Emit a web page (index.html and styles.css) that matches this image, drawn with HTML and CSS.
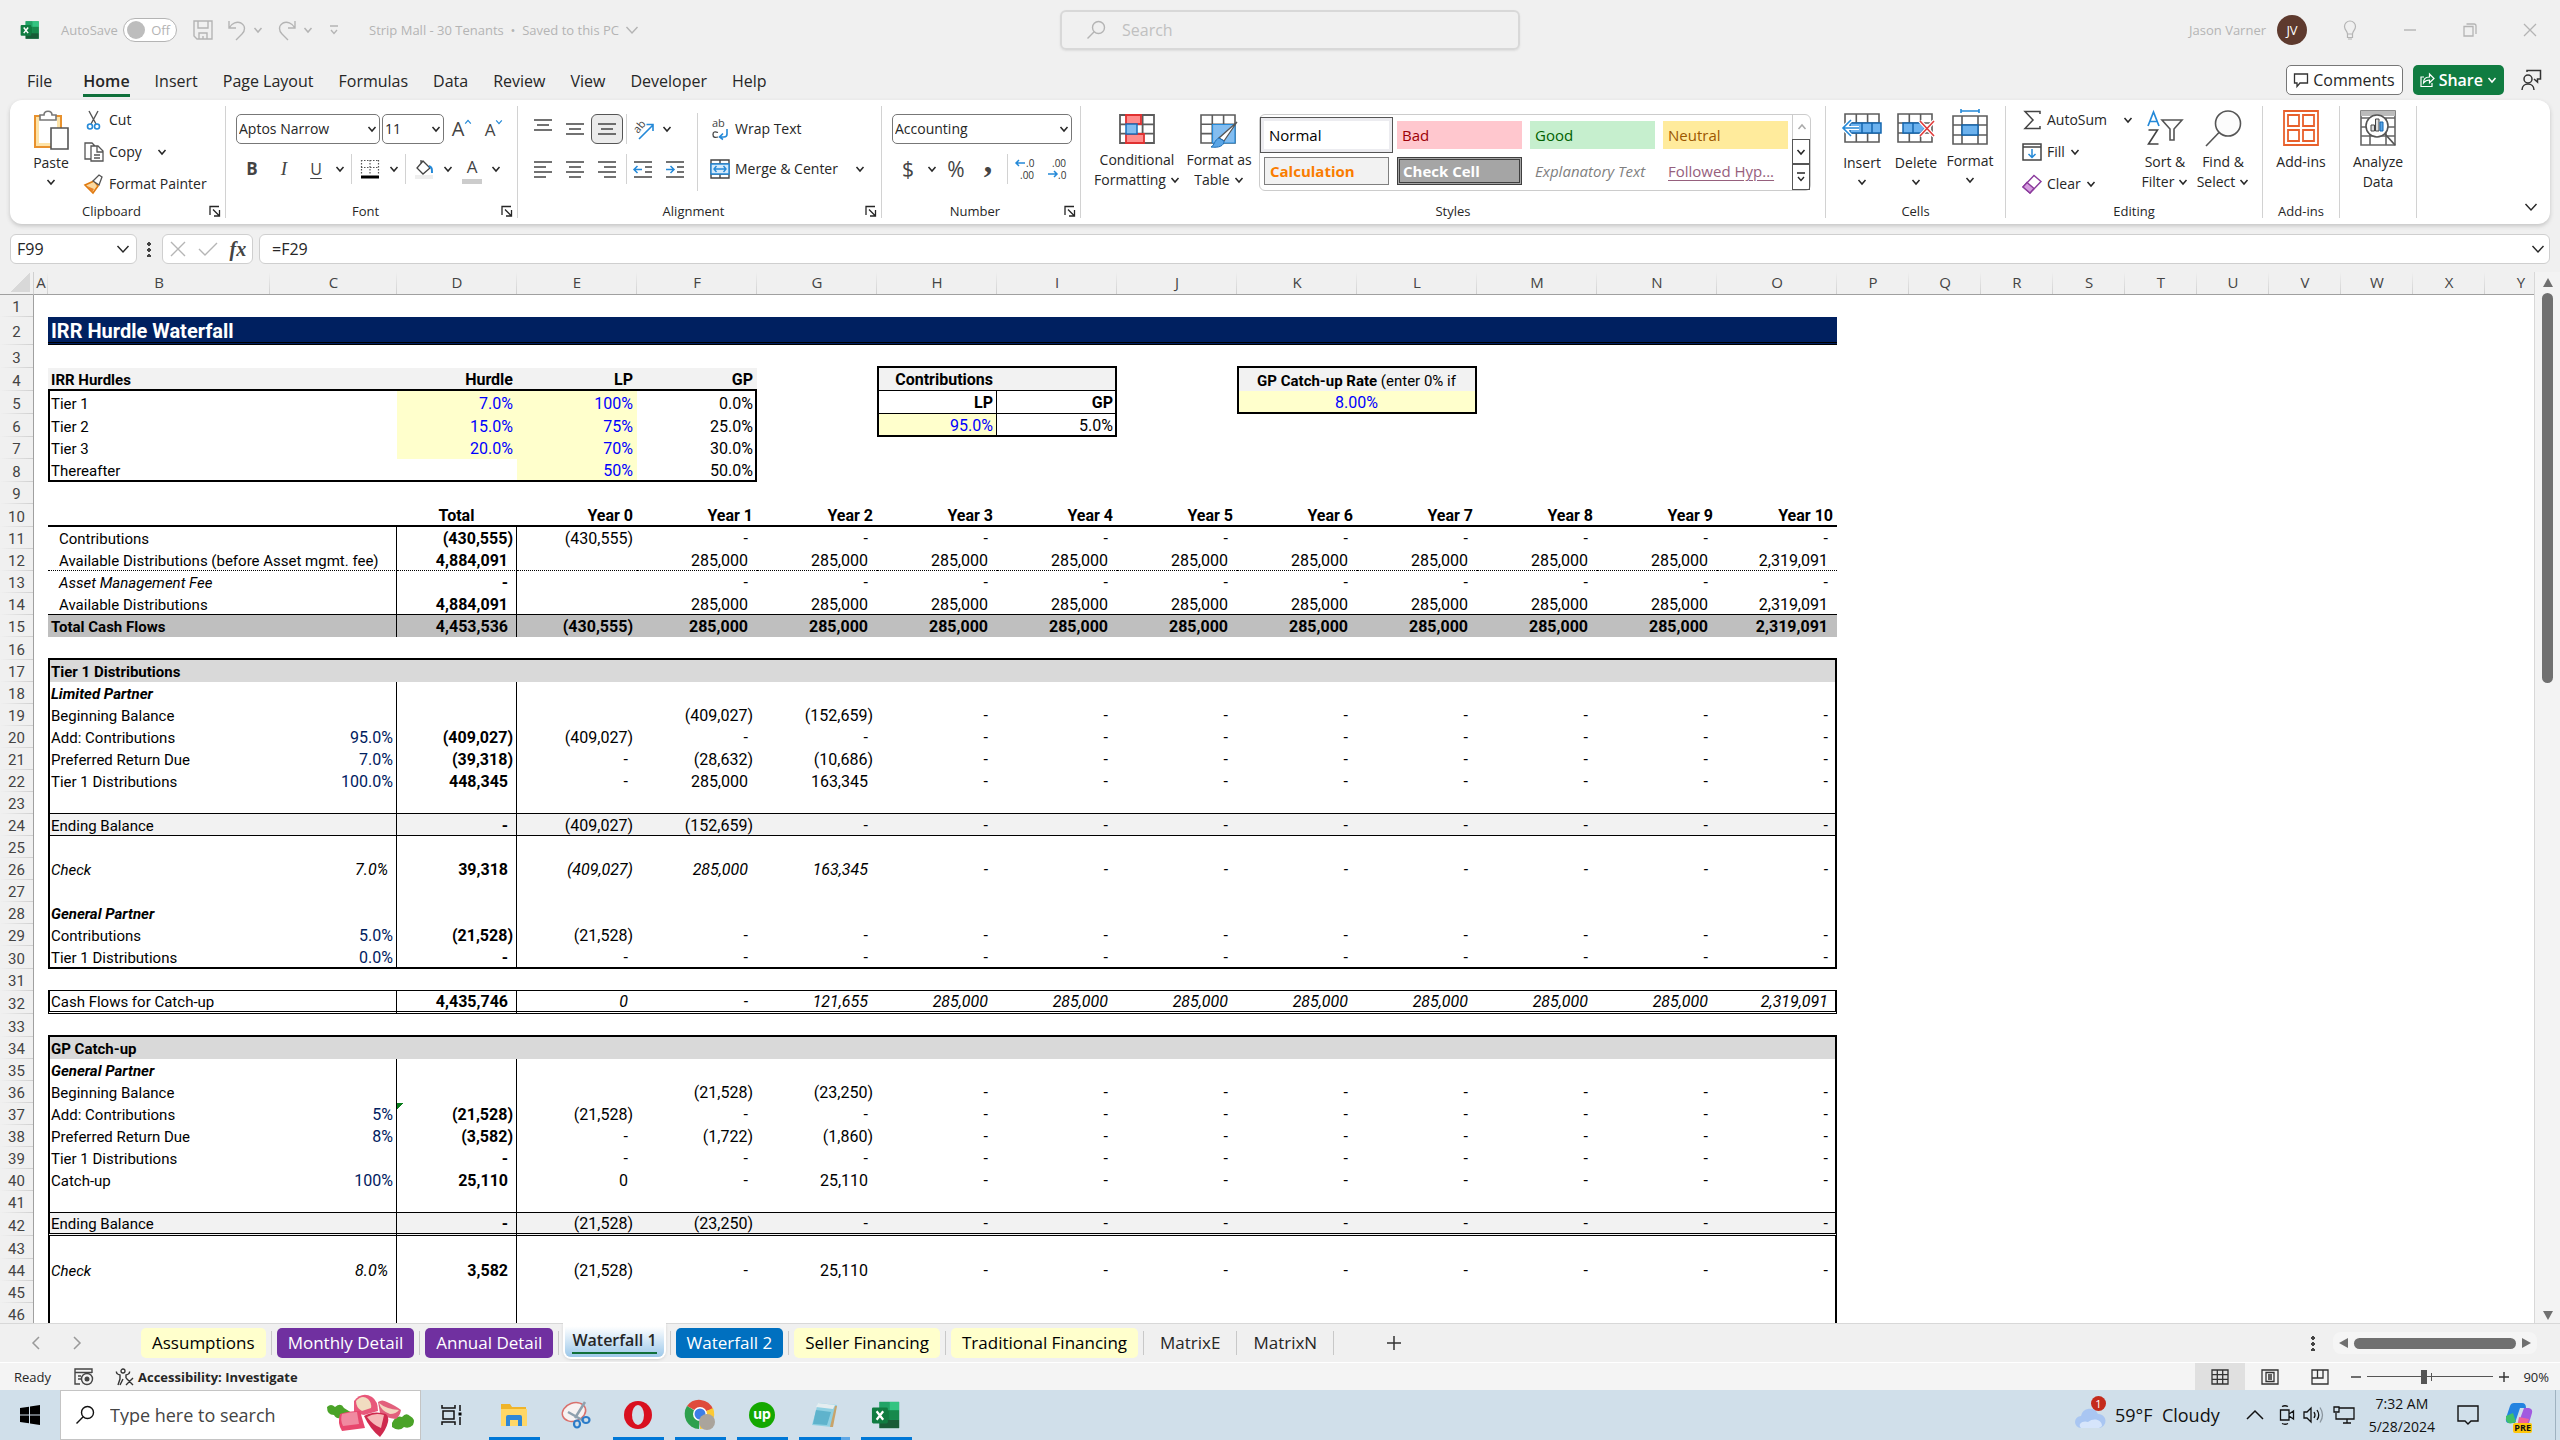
FILE: index.html
```html
<!DOCTYPE html>
<html lang="en">
<head>
<meta charset="utf-8">
<title>Strip Mall - 30 Tenants</title>
<link rel="stylesheet" href="styles.css">
</head>
<body>
<svg class="sprite" aria-hidden="true">
  <symbol id="chev" viewBox="0 0 10 10"><path d="M1.500 3l3.500 4 3.500-4" fill="none" stroke="currentColor" stroke-width="1.500"/></symbol>
  <symbol id="chev-lg" viewBox="0 0 14 14"><path d="M1.500 4l5.500 6 5.500-6" fill="none" stroke="currentColor" stroke-width="1.400"/></symbol>
  <symbol id="launch" viewBox="0 0 12 12"><path d="M1 10V1.500h9M4 4.500l6 6M10.500 5v6H5" fill="none" stroke="currentColor" stroke-width="1.300"/></symbol>
  <symbol id="excel" viewBox="0 0 32 32">
    <path d="M9 2h21v28H9z" fill="#21a366"/><path d="M9 2h11v9H9z" fill="#21a366"/><path d="M20 2h10v9H20z" fill="#33c481"/><path d="M9 11h11v10H9z" fill="#107c41"/><path d="M20 21h10v9H9v-9z" fill="#185c37"/><path d="M20 11h10v10H20z" fill="#17894c"/>
    <rect x="1" y="8" width="17" height="17" rx="1.500" fill="#107c41"/><path d="M6 12l7 9M13 12l-7 9" stroke="#fff" stroke-width="2.400"/>
  </symbol>
  <symbol id="magnify" viewBox="0 0 20 20"><circle cx="12.500" cy="7.500" r="6" fill="none" stroke="currentColor" stroke-width="1.400"/><path d="M8.200 11.800L1.500 18.500" stroke="currentColor" stroke-width="1.400"/></symbol>
  <symbol id="grid3" viewBox="0 0 36 30"><path d="M1 1h34v28H1zM12.300 1v28M23.600 1v28M1 10.300h34M1 19.600h34" fill="#fff" stroke="#5c5c5c" stroke-width="1.800"/></symbol>
  <symbol id="al" viewBox="0 0 20 18"><path d="M1 2h18M1 7h12M1 12h18M1 17h12" stroke="#444" stroke-width="1.500"/></symbol>
  <symbol id="ac" viewBox="0 0 20 18"><path d="M1 2h18M4 7h12M1 12h18M4 17h12" stroke="#444" stroke-width="1.500"/></symbol>
  <symbol id="ar" viewBox="0 0 20 18"><path d="M1 2h18M7 7h12M1 12h18M7 17h12" stroke="#444" stroke-width="1.500"/></symbol>
  <symbol id="v3" viewBox="0 0 20 14"><path d="M1 2h18M4 7h12M1 12h18" stroke="#444" stroke-width="1.500"/></symbol>
</svg>

<header class="titlebar">
  <div class="title-left">
    <svg class="i20"><use href="#excel"/></svg>
    <label class="autosave" for="autosave">AutoSave</label>
    <span class="switch"><input type="checkbox" id="autosave"><span class="switch-text">Off</span></span>
    <button class="tool" aria-label="Save"><svg width="20" height="22" viewBox="0 0 20 22"><path d="M1 2h18v18H4l-3-3zM5 2v7h10V2M6 20v-6h8v6M10 17v3" fill="none" stroke="currentColor" stroke-width="1.400"/></svg></button>
    <button class="tool pair" aria-label="Undo"><svg width="20" height="22" viewBox="0 0 20 22"><path d="M2 2v7h7M2 9c3-5 8-7 12-5 5 3 4 8 1 11l-6 6" fill="none" stroke="currentColor" stroke-width="1.400"/></svg><svg class="i10"><use href="#chev"/></svg></button>
    <button class="tool pair" aria-label="Redo"><svg width="20" height="22" viewBox="0 0 20 22"><path d="M18 2v7h-7M18 9c-3-5-8-7-12-5-5 3-4 8-1 11l6 6" fill="none" stroke="currentColor" stroke-width="1.400"/></svg><svg class="i10"><use href="#chev"/></svg></button>
    <button class="tool" aria-label="Customize"><svg width="10" height="12" viewBox="0 0 10 12"><path d="M1 2h8M2 6l3 3.500L8 6" fill="none" stroke="currentColor" stroke-width="1.300"/></svg></button>
    <button class="tool doc">Strip Mall - 30 Tenants&nbsp; •&nbsp; Saved to this PC <svg class="i14"><use href="#chev-lg"/></svg></button>
  </div>
  <label class="search"><svg class="i20"><use href="#magnify"/></svg><input type="text" placeholder="Search" aria-label="Search"></label>
  <div class="title-right">
    <span>Jason Varner</span><span class="avatar">JV</span>
    <button class="win" aria-label="Tips"><svg width="14" height="20" viewBox="0 0 14 20"><path d="M4.500 14c0-3-3-4-3-7.500a5.500 5.500 0 0111 0c0 3.500-3 4.500-3 7.500zM4.500 14v3.500h5V14M5 19h4" fill="none" stroke="currentColor" stroke-width="1.200"/></svg></button>
    <button class="win" aria-label="Minimize"><svg width="14" height="14" viewBox="0 0 14 14"><path d="M1 7h12" stroke="currentColor" stroke-width="1.400"/></svg></button>
    <button class="win" aria-label="Restore"><svg width="16" height="16" viewBox="0 0 16 16"><path d="M2 4.500h9V14H2zM4.500 2h7.500q2 0 2 2v8" fill="none" stroke="currentColor" stroke-width="1.300"/></svg></button>
    <button class="win" aria-label="Close"><svg width="14" height="14" viewBox="0 0 14 14"><path d="M1 1l12 12M13 1L1 13" stroke="currentColor" stroke-width="1.300"/></svg></button>
  </div>
</header>

<nav class="menu">
  <a href="#file" class="file">File</a><a href="#home" class="current">Home</a><a href="#insert">Insert</a><a href="#layout">Page Layout</a><a href="#formulas">Formulas</a><a href="#data">Data</a><a href="#review">Review</a><a href="#view">View</a><a href="#developer">Developer</a><a href="#help">Help</a>
  <div class="menu-right">
    <button class="comments"><svg width="16" height="16" viewBox="0 0 16 16"><path d="M1.500 2h13v9H7l-3 3.500V11H1.500z" fill="none" stroke="#333" stroke-width="1.300"/></svg>Comments</button>
    <button class="share"><svg width="16" height="16" viewBox="0 0 16 16"><path d="M5 5H2v9.500h11V11M4.500 11c0-4 2-6 6-6V2l4.500 4.500-4.500 4.300V8c-3 0-4.500 1-6 3z" fill="none" stroke="#fff" stroke-width="1.200"/></svg>Share <svg class="i10"><use href="#chev"/></svg></button>
    <button class="tool person" aria-label="Presence"><svg width="22" height="22" viewBox="0 0 22 22"><circle cx="8" cy="10" r="4" fill="none" stroke="currentColor" stroke-width="1.500"/><path d="M2 21c0-8 12-8 12 0M7 3V1.500h13.500V10h-3v3L14 10" fill="none" stroke="currentColor" stroke-width="1.500"/></svg></button>
  </div>
</nav>

<section class="ribbon">
  <div class="group g-clip">
    <div class="body">
      <button class="big paste"><svg width="38" height="40" viewBox="0 0 38 40"><path d="M3 6h26v31H3z" fill="#fde3a8" stroke="#e8912d" stroke-width="2"/><path d="M7 10h18v23H7z" fill="#fff"/><path d="M8 10V5h4c0-5 8-5 8 0h4v5z" fill="#fff" stroke="#777" stroke-width="1.600"/><path d="M19 18h17v21H19z" fill="#fff" stroke="#555" stroke-width="1.600"/></svg><span>Paste</span><svg class="i10"><use href="#chev"/></svg></button>
      <div class="stack">
        <button class="row"><svg width="20" height="20" viewBox="0 0 20 20"><path d="M5 1l7 13M14 1L7 14" stroke="#555" stroke-width="1.400"/><circle cx="6" cy="16.500" r="2.500" fill="none" stroke="#2489d8" stroke-width="1.600"/><circle cx="13" cy="16.500" r="2.500" fill="none" stroke="#2489d8" stroke-width="1.600"/></svg>Cut</button>
        <button class="row"><svg width="20" height="20" viewBox="0 0 20 20"><path d="M7 17H1V1h7l3 3M7 4h7l5 5v10H7zM13 4v6h6M10 13h6M10 16h6" fill="none" stroke="#555" stroke-width="1.300"/></svg>Copy<svg class="i10 far"><use href="#chev"/></svg></button>
        <button class="row"><svg width="20" height="20" viewBox="0 0 20 20"><path d="M1 11l9-4 4 5-5 7z" fill="#fbd9a0" stroke="#e07b10" stroke-width="1.600"/><path d="M9 7l6-6 3 2-3 8z" fill="#fff" stroke="#555" stroke-width="1.300"/><path d="M3 12l5 6 2-3z" fill="#e8832a"/></svg>Format Painter</button>
      </div>
    </div>
    <div class="cap"><span>Clipboard</span><svg class="i12"><use href="#launch"/></svg></div>
  </div>

  <div class="group g-font">
    <div class="body col">
      <div class="line">
        <span class="combo w-name"><input type="text" value="Aptos Narrow" aria-label="Font"><svg class="i10"><use href="#chev"/></svg></span>
        <span class="combo w-size"><input type="text" value="11" aria-label="Font size"><svg class="i10"><use href="#chev"/></svg></span>
        <button class="ib grow" aria-label="Grow font"><span>A</span><svg class="i10 flip"><use href="#chev"/></svg></button>
        <button class="ib shrink" aria-label="Shrink font"><span>A</span><svg class="i10"><use href="#chev"/></svg></button>
      </div>
      <div class="line">
        <button class="ib bold">B</button><button class="ib ital">I</button><button class="ib under">U</button><button class="dd" aria-label="Underline styles"><svg class="i10"><use href="#chev"/></svg></button><i class="vs"></i>
        <button class="ib" aria-label="Borders"><svg width="20" height="20" viewBox="0 0 20 20"><path d="M1.500 1v14M10 1v14M18.500 1v14M1 1.500h18M1 8.500h18" fill="none" stroke="#555" stroke-width="1.200" stroke-dasharray="1.500 1.500"/><path d="M1 18h18" stroke="#000" stroke-width="3"/></svg></button><button class="dd" aria-label="Border styles"><svg class="i10"><use href="#chev"/></svg></button><i class="vs"></i>
        <button class="ib" aria-label="Fill color"><svg width="20" height="20" viewBox="0 0 20 20"><path d="M9 2l7 7-7 6-6-6zM7 5V1" fill="none" stroke="#444" stroke-width="1.300"/><path d="M15 7c3 1 3 3 3 7" fill="none" stroke="#2489d8" stroke-width="2"/><path d="M1 18h18" stroke="#eee" stroke-width="4"/></svg></button><button class="dd" aria-label="Fill colors"><svg class="i10"><use href="#chev"/></svg></button>
        <button class="ib fontcolor" aria-label="Font color">A</button><button class="dd" aria-label="Font colors"><svg class="i10"><use href="#chev"/></svg></button>
      </div>
    </div>
    <div class="cap"><span>Font</span><svg class="i12"><use href="#launch"/></svg></div>
  </div>

  <div class="group g-align">
    <div class="body">
      <div class="col">
        <div class="line">
          <button class="ib raised" aria-label="Top align"><svg width="20" height="14"><use href="#v3"/></svg></button><button class="ib" aria-label="Middle align"><svg width="20" height="14"><use href="#v3"/></svg></button><button class="ib on" aria-label="Bottom align"><svg width="20" height="14"><use href="#v3"/></svg></button><i class="vs"></i>
          <button class="ib" aria-label="Orientation"><svg width="22" height="22" viewBox="0 0 22 22"><path d="M7 21L21 7M14.500 6.500h6.500V13" fill="none" stroke="#2489d8" stroke-width="1.600"/><text x="0" y="0" class="svgab" transform="translate(6 16) rotate(-50)">ab</text></svg></button><button class="dd" aria-label="Orientation options"><svg class="i10"><use href="#chev"/></svg></button>
        </div>
        <div class="line">
          <button class="ib" aria-label="Align left"><svg width="20" height="18"><use href="#al"/></svg></button><button class="ib" aria-label="Center"><svg width="20" height="18"><use href="#ac"/></svg></button><button class="ib" aria-label="Align right"><svg width="20" height="18"><use href="#ar"/></svg></button><i class="vs"></i>
          <button class="ib" aria-label="Decrease indent"><svg width="20" height="18" viewBox="0 0 20 18"><path d="M1 2h18M12 7h7M12 12h7M1 17h18" stroke="#444" stroke-width="1.500"/><path d="M9 9.500H1M4.500 6L1 9.500 4.500 13" fill="none" stroke="#2489d8" stroke-width="1.500"/></svg></button>
          <button class="ib" aria-label="Increase indent"><svg width="20" height="18" viewBox="0 0 20 18"><path d="M1 2h18M12 7h7M12 12h7M1 17h18" stroke="#444" stroke-width="1.500"/><path d="M1 9.500h8M5.500 6L9 9.500 5.500 13" fill="none" stroke="#2489d8" stroke-width="1.500"/></svg></button>
        </div>
      </div>
      <i class="vs tall"></i>
      <div class="col wide">
        <button class="row h30"><svg width="20" height="22" viewBox="0 0 20 22"><text x="2" y="9" class="svgab">ab</text><path d="M8 14.500q-5-2-5 2t5 2.500" fill="none" stroke="#444" stroke-width="1.300"/><path d="M17 11v5q0 3-3 3h-4M13 15.500L9.500 19l3.500 2.500" fill="none" stroke="#2489d8" stroke-width="1.600"/></svg>Wrap Text</button>
        <button class="row h30"><svg width="20" height="20" viewBox="0 0 20 20"><path d="M1 1h18v18H1zM1 5h18M1 15h18M10 1v4M10 15v4" fill="none" stroke="#444" stroke-width="1.400"/><path d="M1 5h18v10H1z" fill="#d5eafa" stroke="#2489d8" stroke-width="1.400"/><path d="M4 10h12M6.500 7L4 10l2.500 3M13.500 7l2.500 3-2.500 3" fill="none" stroke="#2489d8" stroke-width="1.400"/></svg>Merge &amp; Center<svg class="i10 end"><use href="#chev"/></svg></button>
      </div>
    </div>
    <div class="cap"><span>Alignment</span><svg class="i12"><use href="#launch"/></svg></div>
  </div>

  <div class="group g-num">
    <div class="body col">
      <div class="line"><span class="combo w-num"><input type="text" value="Accounting" aria-label="Number format"><svg class="i10"><use href="#chev"/></svg></span></div>
      <div class="line">
        <button class="ib sym">$</button><button class="dd" aria-label="Currencies"><svg class="i10"><use href="#chev"/></svg></button><button class="ib sym pct">%</button><button class="ib sym comma">,</button><i class="vs"></i>
        <button class="ib" aria-label="Increase decimal"><svg width="22" height="24" viewBox="0 0 22 24"><text x="11" y="10" class="dec">.0</text><text x="5" y="22" class="dec">.00</text><path d="M10 6H1M4 3L1 6l3 3" fill="none" stroke="#2489d8" stroke-width="1.500"/></svg></button>
        <button class="ib" aria-label="Decrease decimal"><svg width="22" height="24" viewBox="0 0 22 24"><text x="5" y="10" class="dec">.00</text><text x="11" y="22" class="dec">.0</text><path d="M1 17h9M7 14l3 3-3 3" fill="none" stroke="#2489d8" stroke-width="1.500"/></svg></button>
      </div>
    </div>
    <div class="cap"><span>Number</span><svg class="i12"><use href="#launch"/></svg></div>
  </div>

  <div class="group g-styles">
    <div class="body">
      <button class="big cf"><svg width="36" height="30" viewBox="0 0 36 30"><use href="#grid3"/><path d="M7 1h15v9H7zM7 20h18v9H7z" fill="#ff8b8b" stroke="#e03131" stroke-width="1.800"/><path d="M7 10h11v10H7z" fill="#83bdf0" stroke="#1d6fb8" stroke-width="1.500"/></svg><span>Conditional</span><span>Formatting <svg class="i10"><use href="#chev"/></svg></span></button>
      <button class="big ft"><svg width="38" height="34" viewBox="0 0 38 34"><path d="M1 1h34v28H1zM12.300 1v28M23.600 1v28M1 10.300h34M1 19.600h34" fill="#fff" stroke="#5c5c5c" stroke-width="1.600"/><path d="M12.500 10.500H35V29H12.500z" fill="#83bdf0" stroke="#2489d8" stroke-width="1.200"/><path d="M37 8L24 27l-5-3z" fill="#fff" stroke="#555" stroke-width="1.300"/><path d="M19 24l5 3c0 5-5 7-13 6 4-2 3-7 8-9z" fill="#5aa5e6" stroke="#1d6fb8"/></svg><span>Format as</span><span>Table <svg class="i10"><use href="#chev"/></svg></span></button>
      <div class="gallery">
        <div class="cells">
          <button class="st normal">Normal</button><button class="st bad">Bad</button><button class="st good">Good</button><button class="st neutral">Neutral</button>
          <button class="st calc">Calculation</button><button class="st check">Check Cell</button><button class="st expl">Explanatory Text</button><button class="st hyp">Followed Hyp...</button>
        </div>
        <div class="scroll">
          <button class="dim" aria-label="Previous styles"><svg class="i10 flip"><use href="#chev"/></svg></button><button aria-label="Next styles"><svg class="i10"><use href="#chev"/></svg></button><button aria-label="More styles"><svg width="10" height="12" viewBox="0 0 10 12"><path d="M1 2h8M2 6l3 3.500L8 6" fill="none" stroke="currentColor" stroke-width="1.400"/></svg></button>
        </div>
      </div>
    </div>
    <div class="cap"><span>Styles</span></div>
  </div>

  <div class="group g-cells">
    <div class="body">
      <button class="big c54 low"><svg width="40" height="34" viewBox="0 0 40 34"><path d="M3 5h34v28H3zM14.300 5v28M25.600 5v28M3 14h34M3 24h34" fill="#fff" stroke="#5c5c5c" stroke-width="1.600"/><path d="M8 14h31v10H8zM20 14v10M30 14v10" fill="#6cb2ee" stroke="#1467b0" stroke-width="1.500"/><path d="M17 19H1M9 11l-8 8 8 8" fill="none" stroke="#fff" stroke-width="4"/><path d="M17 19H1M9 11l-8 8 8 8" fill="none" stroke="#2489d8" stroke-width="1.600"/></svg><span>Insert</span><svg class="i10"><use href="#chev"/></svg></button>
      <button class="big c54 low"><svg width="40" height="34" viewBox="0 0 40 34"><path d="M2 5h34v28H2zM13.300 5v28M24.600 5v28M2 14h34M2 24h34" fill="#fff" stroke="#5c5c5c" stroke-width="1.600"/><path d="M7 14h18l4 5-4 5H7zM17 14v10" fill="#6cb2ee" stroke="#1467b0" stroke-width="1.500"/><path d="M24 12l14 15M38 12L24 27" stroke="#fff" stroke-width="4"/><path d="M24 12l14 15M38 12L24 27" stroke="#e03a3a" stroke-width="1.600"/></svg><span>Delete</span><svg class="i10"><use href="#chev"/></svg></button>
      <button class="big c54 low"><svg width="40" height="36" viewBox="0 0 40 36"><path d="M3 7h34v28H3zM12 7v28M28 7v28M3 16h34M3 26h34" fill="#fff" stroke="#5c5c5c" stroke-width="1.600"/><path d="M12 16h16v10H12z" fill="#6cb2ee" stroke="#1467b0" stroke-width="1.500"/><path d="M11 2h18M11 0v4M29 0v4" stroke="#2489d8" stroke-width="1.600"/></svg><span>Format</span><svg class="i10"><use href="#chev"/></svg></button>
    </div>
    <div class="cap"><span>Cells</span></div>
  </div>

  <div class="group g-edit">
    <div class="body">
      <div class="stack">
        <button class="row"><svg width="20" height="20" viewBox="0 0 20 20"><path d="M18 4V1.500H3l8 8.500-8 8.500h15V16" fill="none" stroke="#444" stroke-width="1.500"/></svg>AutoSum<svg class="i10 end"><use href="#chev"/></svg></button>
        <button class="row"><svg width="20" height="20" viewBox="0 0 20 20"><path d="M1 2h18v16H1zM1 5h18" fill="#fff" stroke="#444" stroke-width="1.500"/><path d="M10 7v8M6.500 12l3.500 3.500 3.500-3.500" fill="none" stroke="#2489d8" stroke-width="1.500"/></svg>Fill<svg class="i10"><use href="#chev"/></svg></button>
        <button class="row"><svg width="20" height="20" viewBox="0 0 20 20"><path d="M1 13L12 1.500l7 6L8 19z" fill="#fff" stroke="#8a3a9c" stroke-width="1.400"/><path d="M1 13l4-4.500 7 6L8 19z" fill="#d59bdf" stroke="#8a3a9c" stroke-width="1.400"/></svg>Clear<svg class="i10"><use href="#chev"/></svg></button>
      </div>
      <button class="big c58"><svg width="36" height="36" viewBox="0 0 36 36"><path d="M1 16L6.500 2 12 16M3 11.500h7" fill="none" stroke="#2489d8" stroke-width="1.700"/><path d="M1.500 20h9l-9 14h10" fill="none" stroke="#444" stroke-width="1.600"/><path d="M15 10h20l-8 9v11h-4V19z" fill="#fff" stroke="#555" stroke-width="1.600"/></svg><span>Sort &amp;</span><span>Filter <svg class="i10"><use href="#chev"/></svg></span></button>
      <button class="big c58"><svg width="38" height="36" viewBox="0 0 38 36"><circle cx="24" cy="13.500" r="12.500" fill="#fcfcfc" stroke="#555" stroke-width="1.600"/><path d="M15 22.500L2 36" stroke="#555" stroke-width="1.600"/></svg><span>Find &amp;</span><span>Select <svg class="i10"><use href="#chev"/></svg></span></button>
    </div>
    <div class="cap"><span>Editing</span></div>
  </div>

  <div class="group g-add">
    <div class="body"><button class="big c76"><svg width="36" height="36" viewBox="0 0 36 36"><path d="M1 1h34v34H1zM5 5h11v11H5zM20 5h11v11H20zM5 20h11v11H5zM20 20h11v11H20z" fill="none" stroke="#e8602c" stroke-width="1.800"/></svg><span>Add-ins</span></button></div>
    <div class="cap"><span>Add-ins</span></div>
  </div>
  <div class="group g-add">
    <div class="body"><button class="big c76"><svg width="36" height="36" viewBox="0 0 36 36"><path d="M1 1h34v34H1zM1 8h34M1 17h34M1 26h34M10 8v27M26 8v27" fill="#fff" stroke="#666" stroke-width="1.600"/><path d="M1 1h34v5H1z" fill="#bbb"/><circle cx="17" cy="16" r="11" fill="#fff" stroke="#555" stroke-width="1.600"/><path d="M25 24l10 11" stroke="#555" stroke-width="1.800"/><path d="M11 15h3.500v6H11zM15.500 9H19v12h-3.500z" fill="#ddd" stroke="#444"/><path d="M20 12h3v9h-3z" fill="#5aa5e6" stroke="#1467b0"/></svg><span>Analyze</span><span>Data</span></button></div>
    <div class="cap"></div>
  </div>
  <button class="collapse" aria-label="Collapse ribbon"><svg class="i14"><use href="#chev-lg"/></svg></button>
</section>

<section class="formula">
  <div class="namebox"><input type="text" value="F99" aria-label="Name box"><svg class="i14"><use href="#chev-lg"/></svg></div>
  <span class="dots"></span>
  <div class="fxbox">
    <button aria-label="Cancel"><svg width="18" height="16" viewBox="0 0 18 16"><path d="M2 1l14 14M16 1L2 15" stroke="#b5b5b5" stroke-width="1.400"/></svg></button><button aria-label="Enter"><svg width="20" height="16" viewBox="0 0 20 16"><path d="M1 8l6 6L19 2" fill="none" stroke="#b5b5b5" stroke-width="1.400"/></svg></button><button class="fx">fx</button>
  </div>
  <div class="fbar"><input type="text" value="=F29" aria-label="Formula"><svg class="i14"><use href="#chev-lg"/></svg></div>
</section>

<main class="work">
  <div class="sheet"><table class="grid" id="grid"><colgroup></colgroup><thead></thead><tbody></tbody></table></div>
  <div class="vbar"><i class="tri up"></i><i class="thumb"></i><i class="fill"></i><i class="tri down"></i></div>
</main>

<nav class="tabs">
  <button class="nav" aria-label="Previous sheet"><svg width="10" height="14" viewBox="0 0 10 14"><path d="M8 1L2 7l6 6" fill="none" stroke="#999" stroke-width="1.500"/></svg></button>
  <button class="nav" aria-label="Next sheet"><svg width="10" height="14" viewBox="0 0 10 14"><path d="M2 1l6 6-6 6" fill="none" stroke="#999" stroke-width="1.500"/></svg></button>
  <div class="tablist">
    <button class="tab yellow">Assumptions</button><i></i><button class="tab purple">Monthly Detail</button><i></i><button class="tab purple">Annual Detail</button><i></i><button class="tab active"><span>Waterfall 1</span></button><i></i><button class="tab blue">Waterfall 2</button><i></i><button class="tab yellow">Seller Financing</button><i></i><button class="tab yellow">Traditional Financing</button><i></i><button class="tab">MatrixE</button><i></i><button class="tab">MatrixN</button><i></i>
  </div>
  <button class="plus" aria-label="New sheet"><svg width="16" height="16" viewBox="0 0 16 16"><path d="M8 1v14M1 8h14" stroke="#333" stroke-width="1.500"/></svg></button>
  <span class="dots"></span>
  <div class="hbar"><i class="tri left"></i><i class="thumb"></i><i class="tri right"></i></div>
</nav>

<footer class="status">
  <span class="ready">Ready</span>
  <svg width="20" height="18" viewBox="0 0 20 18"><path d="M6 16H1V1h17v4M1 4.500h17M4 8h3M4 11h3" fill="none" stroke="#444" stroke-width="1.400"/><circle cx="13" cy="11" r="5.500" fill="#f4f4f4" stroke="#444" stroke-width="1.400"/><circle cx="13" cy="11" r="2.500" fill="#444"/></svg>
  <button class="access"><svg width="20" height="18" viewBox="0 0 20 18"><circle cx="8" cy="3" r="2" fill="none" stroke="#333" stroke-width="1.300"/><path d="M1.500 3.500Q1 6 5 7v4l-2 6M14.500 3.500Q15 6 11 7v3M8 11l-3 6M11 10l7 7M18 10l-7 7" fill="none" stroke="#333" stroke-width="1.400"/></svg>Accessibility: Investigate</button>
  <div class="views">
    <button class="on" aria-label="Normal view"><svg width="18" height="16" viewBox="0 0 18 16"><path d="M1 1h16v14H1zM6.300 1v14M11.700 1v14M1 5.700h16M1 10.300h16" fill="none" stroke="#333" stroke-width="1.300"/></svg></button>
    <button aria-label="Page layout view"><svg width="18" height="16" viewBox="0 0 18 16"><path d="M1 1h16v14H1zM5 3.500h8v9H5zM7 6h4M7 8h4M7 10h4" fill="none" stroke="#333" stroke-width="1.300"/></svg></button>
    <button aria-label="Page break view"><svg width="18" height="16" viewBox="0 0 18 16"><path d="M1 1h16v14H1zM1 9h11V1M6.500 1v8" fill="none" stroke="#333" stroke-width="1.300"/></svg></button>
  </div>
  <button class="zb" aria-label="Zoom out"><svg width="12" height="12" viewBox="0 0 12 12"><path d="M1 6h10" stroke="#333" stroke-width="1.400"/></svg></button>
  <input type="range" class="zoom" min="10" max="190" value="90" aria-label="Zoom">
  <button class="zb" aria-label="Zoom in"><svg width="12" height="12" viewBox="0 0 12 12"><path d="M1 6h10M6 1v10" stroke="#333" stroke-width="1.400"/></svg></button>
  <span class="pctz">90%</span>
</footer>

<footer class="taskbar">
  <button class="start" aria-label="Start"><svg width="22" height="20" viewBox="0 0 22 20"><path d="M1 3l9-1.200V9.500H1zM11 1.600L21 0v9.500H11zM1 10.500h9v7.700L1 17zM11 10.500h10V20l-10-1.600z"/></svg></button>
  <label class="tsearch"><svg class="i20"><use href="#magnify"/></svg><input type="text" placeholder="Type here to search" aria-label="Type here to search">
    <svg width="90" height="44" viewBox="0 0 90 44"><path d="M1 14q4-4 8 0 6-5 9 1l8 5-8 4q-8 3-10-2-7 0-7-8zM66 30q4-8 10-6 4-5 8-1 6 3 3 9-4 4-9 2-5 5-12 0z" fill="#4aa328"/><path d="M28 8q8-10 18-4 6 4 6 14l-14 4-10-2z" fill="#e8577a"/><path d="M30 8q6-7 12-2 4 4 3 9l-9 3q-6-3-6-10z" fill="#f1dcc0"/><path d="M52 9q4-3 9 0 9 4 14 8-1 6-5 9-11-1-16-6z" fill="#e2607c"/><path d="M53 10q7 6 20 7-3 4-9 4-9-3-11-11z" fill="#f3d6c0"/><path d="M14 21q8-3 20-3l5 17-23 3q-5-8-2-17z" fill="#e8476d"/><path d="M16 21q8-2 15-2l2 12-16 2q-3-6-1-12z" fill="#f08aa0"/><path d="M38 23q10-6 22-2 3 3 2 8-2 8-8 15-10-8-16-21z" fill="#cf2a4e"/><path d="M41 24q8-5 17-2l-3 13q-8-3-14-11z" fill="#f6b9b8"/></svg></label>
  <button class="app" aria-label="Task view"><svg width="22" height="22" viewBox="0 0 22 22"><path d="M1 1v3h13V1M1 21v-3h13v3M2 7h11v8H2zM19 1v6M19 13v8" fill="none" stroke="#111" stroke-width="1.500"/><path d="M17.500 8.500h3v3h-3z"/></svg></button>
  <button class="app run" aria-label="File Explorer"><svg width="28" height="26" viewBox="0 0 28 26"><path d="M1 2h9l2 3h14v19H1z" fill="#f0b429"/><path d="M1 7h26v17H1z" fill="#ffd766"/><path d="M6 24v-9q0-2 2-2h12q2 0 2 2v9h-4v-6h-8v6z" fill="#2f87d6"/></svg></button>
  <button class="app" aria-label="Snip"><svg width="30" height="28" viewBox="0 0 30 28"><ellipse cx="13" cy="11" rx="12" ry="9" fill="#f7f2f2" stroke="#d9706c" stroke-width="1.500" transform="rotate(-20 13 11)"/><path d="M24 1L14 17M7 11l16 9" stroke="#8fa0ae" stroke-width="2.500"/><ellipse cx="16" cy="23" rx="3" ry="3.500" fill="none" stroke="#2b7cc9" stroke-width="2.200"/><ellipse cx="25" cy="19" rx="3.500" ry="3" fill="none" stroke="#2b7cc9" stroke-width="2.200"/></svg></button>
  <button class="app run" aria-label="Opera"><svg width="28" height="28" viewBox="0 0 28 28"><circle cx="14" cy="14" r="14" fill="#d9101f"/><ellipse cx="14" cy="14" rx="6" ry="10" fill="#d0dfea"/></svg></button>
  <button class="app run" aria-label="Chrome"><svg width="32" height="32" viewBox="0 0 32 32"><path d="M16 14L3 7a15 15 0 0126 3z" fill="#df4b3c"/><path d="M16 15l13-6a15 15 0 01-13 21z" fill="#fcc934"/><path d="M16 15L3 7a15 15 0 0012 23z" fill="#2da04e"/><circle cx="16" cy="15" r="7" fill="#fff"/><circle cx="16" cy="15" r="5.500" fill="#3c7ee8"/><circle cx="23" cy="23" r="8" fill="#aaa49c"/></svg></button>
  <button class="app run upw" aria-label="Upwork"><span>up</span></button>
  <button class="app run multi" aria-label="Notepad"><svg width="30" height="28" viewBox="0 0 30 28"><path d="M9 2l19 2-5 22-20-2z" fill="#8fd0e2"/><path d="M9 2l17 2-2 4-17-2z" fill="#e4edf0"/><path d="M26 5l2 0-4 21-3 0z" fill="#c9a36a"/><path d="M7 9l15 2-4 13-14-1z" fill="#5fb3cc"/></svg></button>
  <button class="app run" aria-label="Excel"><svg width="30" height="30"><use href="#excel"/></svg></button>
  <div class="tray">
    <span class="wicon"><svg width="32" height="22" viewBox="0 0 32 22"><path d="M7 21a6 6 0 010-12 9 9 0 0117-2 7 7 0 011 14z" fill="#a9c6f2"/><path d="M7 21c-4-4 2-8 7-6 6-5 14-2 14 4l-3 2z" fill="#d6e5fb"/></svg><b>1</b></span>
    <span class="temp">59°F&nbsp; Cloudy</span>
    <svg class="t1" width="18" height="10" viewBox="0 0 18 10"><path d="M1 9l8-8 8 8" fill="none" stroke="#111" stroke-width="1.500"/></svg>
    <svg width="16" height="20" viewBox="0 0 16 20"><path d="M1.500 5h8.500v10H1.500zM10 9l4.500-3v8L10 11M3 1.500q3-1.500 6 0M3 18.500q3 1.500 6 0" fill="none" stroke="#111" stroke-width="1.300"/></svg>
    <svg width="22" height="18" viewBox="0 0 22 18"><path d="M1 6h3l4-4v14l-4-4H1zM11 6q2 3 0 6M14 4q3.500 5 0 10" fill="none" stroke="#111" stroke-width="1.300"/><path d="M17 1.500q5 7.500 0 15" fill="none" stroke="#8a959e" stroke-width="1.300"/></svg>
    <svg width="22" height="20" viewBox="0 0 22 20"><path d="M6 3h15v11H3V8M10 18h8M14 14v4M1 2h5v5H1z" fill="none" stroke="#111" stroke-width="1.300"/></svg>
    <span class="clock">7:32 AM<br>5/28/2024</span>
    <svg class="t2" width="22" height="22" viewBox="0 0 22 22"><path d="M1 2h20v15h-7l-3 3-3-3H1z" fill="none" stroke="#111" stroke-width="1.400"/></svg>
    <span class="copilot"><svg width="28" height="24" viewBox="0 0 28 24"><path d="M9 0h8q4 0 4 5l-6 0-5 15H4q-4 0-3-5l4-12q1-3 4-3z" fill="#2383e0"/><path d="M1 13l7-3 3 9q-9 4-10-3z" fill="#3fc06b"/><path d="M19 5h5q4 1 3 5l-3 10q-1 4-6 4h-6z" fill="#a15be0"/><path d="M14 14l10 2-3 8h-9z" fill="#f2619a"/></svg><b>PRE</b></span>
  </div>
</footer>
<script src="grid.js"></script>
</body>
</html>
```
FILE: styles.css
```css
* { box-sizing: border-box; }
body { margin: 0; height: 100vh; display: flex; flex-direction: column; overflow: hidden; background: #f0f0f0; color: #262626; font: 14px/20px "Open Sans", "Noto Sans", sans-serif; }
button, input { font: inherit; color: inherit; background: none; border: 0; padding: 0; margin: 0; min-width: 0; }
button { white-space: nowrap; }
svg { flex: none; display: block; overflow: visible; }
svg.i10 { width: 10px; height: 10px; }
svg.i12 { width: 12px; height: 12px; }
svg.i14 { width: 14px; height: 14px; }
svg.i20 { width: 20px; height: 20px; }
.sprite { position: absolute; width: 0; height: 0; }
.flip { transform: rotate(180deg); }

/* title bar */
.titlebar { display: grid; grid-template-columns: 1060fr 460px 1040fr; align-items: center; height: 60px; flex: none; color: #b4b4b4; font-size: 13px; }
.title-left { display: flex; align-items: center; padding-left: 20px; }
.autosave { margin-left: 21px; width: 62px; }
.switch { display: flex; align-items: center; width: 54px; height: 24px; border: 1px solid #b4b4b4; border-radius: 12px; background: #fff; padding: 0 6px 0 3px; justify-content: space-between; }
.switch input { appearance: none; width: 18px; height: 18px; border-radius: 50%; background: #bdbdbd; }
.tool { display: flex; align-items: center; color: inherit; margin-left: 16px; }
.pair { gap: 6px; margin-left: 14px; }
.doc { margin-left: 30px; gap: 6px; }
.search { display: flex; align-items: center; gap: 16px; height: 40px; border: 2px solid #d8d8d8; border-radius: 6px; padding-left: 24px; font-size: 16px; box-shadow: 0 1px 2px #ddd; }
.search input { flex: 1; }
.search input::placeholder { color: #c0c0c0; }
.title-right { display: flex; align-items: center; justify-content: flex-end; }
.avatar { width: 30px; height: 30px; border-radius: 50%; background: #5e3a2e; color: #fff; text-align: center; line-height: 30px; margin: 0 13px 0 11px; }
.win { width: 60px; display: flex; justify-content: center; }

/* menu */
.menu { display: flex; align-items: center; height: 40px; flex: none; font-size: 16px; gap: 25px; padding: 0 18px 0 27px; }
.menu a { color: #262626; text-decoration: none; height: 40px; line-height: 42px; }
.menu .file { margin-right: 6px; }
.menu .current { font-weight: 600; background: linear-gradient(#0f703b, #0f703b) 0 34px / 100% 3px no-repeat; }
.menu-right { margin-left: auto; display: flex; align-items: center; gap: 10px; }
.comments, .share { display: flex; align-items: center; gap: 4px; height: 30px; border-radius: 5px; padding: 0 7px 0 6px; }
.comments { background: #fff; border: 1px solid #777; }
.share { background: #107c41; color: #fff; font-weight: 600; }
.person { margin-left: 6px; color: #333; }

/* ribbon */
.ribbon { display: flex; height: 124px; flex: none; margin: 0 10px; background: #fff; border-radius: 12px; box-shadow: 0 2px 4px #c4c4c4; padding-top: 6px; }
.group { display: flex; flex-direction: column; height: 112px; border-right: 1px solid #d2d2d2; flex: none; }
.body { display: flex; flex: 1; }
.body.col, .col { display: flex; flex-direction: column; gap: 10px; padding-top: 8px; }
.cap { display: flex; align-items: center; height: 14px; font-size: 13px; padding: 0 4px; }
.cap span { flex: 1; text-align: center; }
.g-clip { width: 216px; } .g-font { width: 292px; } .g-align { width: 364px; } .g-num { width: 199px; }
.g-styles { width: 745px; } .g-cells { width: 180px; } .g-edit { width: 257px; } .g-add { width: 77px; }
.g-font .body, .g-num .body { padding-left: 10px; }
.big { display: flex; flex-direction: column; align-items: center; padding-top: 4px; }
.big span { display: flex; align-items: center; gap: 4px; }
.big > svg:first-child { margin-bottom: 6px; }
.paste { width: 66px; margin-left: 8px; }
.paste > svg:first-child { margin-bottom: 3px; }
.paste span { margin-bottom: 4px; }
.stack { display: flex; flex-direction: column; gap: 12px; padding-top: 4px; }
.row { display: flex; align-items: center; gap: 5px; height: 20px; }
.row.h30 { height: 30px; }
.far { margin-left: 10px; }
.end { margin-left: auto; }
.line { display: flex; align-items: center; height: 30px; }
.combo { display: flex; align-items: center; height: 30px; border: 1px solid #777; border-radius: 5px; padding: 0 2px; background: #fff; }
.combo input { flex: 1; width: 0; }
.w-name { width: 144px; margin-right: 2px; } .w-size { width: 62px; margin-right: 2px; } .w-num { width: 180px; }
.ib { width: 32px; height: 30px; display: flex; align-items: center; justify-content: center; flex: none; color: #444; }
.grow, .shrink { align-items: flex-start; }
.grow span { font-size: 20px; line-height: 30px; } .shrink span { font-size: 17px; line-height: 32px; }
.grow svg, .shrink svg { color: #2489d8; margin-top: 4px; width: 8px; height: 8px; }
.dd { width: 16px; height: 30px; display: flex; align-items: center; justify-content: center; }
.vs { width: 1px; height: 30px; background: #d2d2d2; margin: 0 2px 0 3px; flex: none; }
.bold { font-weight: 700; font-size: 17px; }
.ital { font: italic 19px "Liberation Serif", serif; }
.under { text-decoration: underline; font-size: 16px; text-underline-offset: 3px; }
.fontcolor { font-size: 17px; background: linear-gradient(#ccc, #ccc) center 25px / 20px 5px no-repeat; padding-bottom: 4px; }
.g-align .body > .col:first-child { padding-left: 9px; width: 179px; }
.g-align .line .vs { margin-right: 0; }
.raised { padding-bottom: 8px; }
.on { background: #ebebeb; }
.ib.on { border: 1px solid #555; border-radius: 6px; }
.tall { height: 78px; margin: 7px 12px 0 0; }
.wide { flex: 1; padding-right: 16px; }
.svgab { font: 11px "Open Sans", sans-serif; fill: #444; }
.dec { font: 10px "Open Sans", sans-serif; fill: #333; }
.sym { font-size: 21px; }
.comma { font: 700 34px/10px "Liberation Serif", serif; padding-bottom: 16px; }
.cf { width: 86px; margin-left: 13px; padding-top: 8px; }
.ft { width: 72px; padding-top: 8px; margin-left: 3px; }
.ft > svg:first-child { margin-bottom: 2px; }
.gallery { display: flex; flex: 1; margin: 8px 14px 0 4px; height: 77px; border: 1px solid #ccc; border-radius: 6px; }
.cells { flex: 1; display: grid; grid-template-columns: repeat(4, 125px); gap: 8px; padding: 6px 4px; grid-auto-rows: 28px; }
.st { text-align: left; padding-left: 5px; font-size: 15px; }
.normal { background: #fff; outline: 3px solid #ececf0; border: 0; box-shadow: 0 0 0 4px #555; color: #000; }
.bad { background: #ffc7ce; color: #9c0006; }
.good { background: #c6efce; color: #006100; }
.neutral { background: #ffeb9c; color: #9c5700; }
.calc { background: #f2f2f2; border: 1px solid #7f7f7f; color: #fa7d00; font-weight: 700; }
.check { background: #a5a5a5; border: 3px double #3f3f3f; color: #fff; font-weight: 700; padding-left: 3px; }
.expl { color: #7f7f7f; font-style: italic; }
.hyp { color: #96607d; text-decoration: underline; text-underline-offset: 3px; }
.scroll { display: flex; flex-direction: column; width: 18px; }
.scroll button { flex: 1; display: flex; align-items: center; justify-content: center; border: 1px solid #555; }
.scroll .dim { border: 0; border-left: 1px solid #ccc; color: #aaa; }
.c54 { width: 54px; }
.c58 { width: 58px; }
.c76 { width: 76px; }
.g-cells .body { padding-left: 9px; }
.low { padding-top: 3px; }
.low > svg:first-child { margin-bottom: 10px; }
.low span { margin-bottom: 4px; }
.low:last-child > svg:first-child { margin: 0 0 6px; }
.g-edit .stack { width: 111px; margin-left: 16px; margin-right: 3px; }
.collapse { margin: 94px 12px 0 auto; height: 14px; }

/* formula bar */
.formula { display: flex; height: 30px; flex: none; margin: 10px 10px 8px; font-size: 16px; }
.formula > div { display: flex; align-items: center; background: #fff; border: 1px solid #cfcfcf; border-radius: 6px; }
.namebox { width: 127px; padding: 0 6px; }
.namebox input { flex: 1; }
.dots { width: 4px; height: 16px; margin: 0 11px 0 10px; align-self: center; background: radial-gradient(circle, #444 2px, transparent 2px) 0 0 / 4px 6px; }
.fxbox { width: 91px; margin-right: 6px; justify-content: space-around; }
.fx { font: italic 700 20px "Liberation Serif", serif; color: #444; }
.fbar { flex: 1; padding: 0 4px 0 12px; }
.fbar input { flex: 1; }

/* grid */
.work { display: flex; flex: 1; min-height: 0; }
.sheet { flex: 1; overflow: hidden; background: #fff; border-right: 1px solid #d8d8d8; }
.grid { table-layout: fixed; border-collapse: separate; border-spacing: 0; width: 2557px; font: 16px/18px Roboto, "Liberation Sans", sans-serif; color: #000; }
.grid th, .grid td { padding: 2px 4px 0 3px; white-space: nowrap; text-align: right; }
.grid thead th { height: 23px; background: linear-gradient(#f0f0f0, #d0d0d0) right / 1px 100% no-repeat #f0f0f0; border-bottom: 1px solid #a0a0a0; text-align: center; font: 15px/20px "Open Sans", sans-serif; color: #444; padding: 0 0 2px; }
.grid tbody th { background: linear-gradient(90deg, #f0f0f0, #d0d0d0) bottom / 100% 1px no-repeat #f0f0f0; border-right: 1px solid #a0a0a0; text-align: center; font-weight: 400; font-size: 15px; color: #444; padding: 2px 0 0; }
.grid .corner { background: linear-gradient(135deg, transparent 62%, #d8d8d8 62%) 0 0 / 30px 20px no-repeat #f0f0f0; border-right: 1px solid #d0d0d0; }
.grid td.txt { text-align: left; font-size: 15px; }
.grid td.r1 { border-right: 1px solid #000; padding-right: 3px; }
.grid td.r2 { border-right: 2px solid #000; padding-right: 2px; }
.grid td.pos { padding-right: 9px; }
.grid td.pos.r1 { padding-right: 8px; }
.grid td.pos.r2 { padding-right: 7px; }
.grid td.ctr { text-align: center; }
.grid td.l2 { border-left: 2px solid #000; padding-left: 1px; }
.grid td.ind { padding-left: 11px; }
.grid td.b { font-weight: 700; }
.grid td.it { font-style: italic; }
.grid td.blue { color: #0000ff; }
.grid td.navy { color: #002060; }
.grid td.in { background: #ffffcc; }
.grid td.lt { background: #f2f2f2; }
.grid td.md { background: #d9d9d9; }
.grid td.dk { background: #bfbfbf; }
.grid td.banner { background: #002060; color: #fff; }
.grid td.h1 { font-size: 20px; }
.grid td.u1 { border-bottom: 1px solid #000; }
.grid td.u2 { border-bottom: 2px solid #000; }
.grid td.ud { border-bottom: 3px double #000; }
.grid td.dot { border-bottom: 1px dotted #000; }
.grid td.flag { background: linear-gradient(135deg, #0a7d1c 50%, transparent 50%) 0 0 / 7px 7px no-repeat; }

/* scroll bars */
.vbar { width: 25px; display: flex; flex-direction: column; align-items: center; background: #f3f3f3; padding: 3px 0; gap: 6px; }
.thumb { background: #707070; border-radius: 6px; }
.vbar .thumb { width: 11px; height: 390px; }
.fill { flex: 1; }
.tri { border: 5px solid transparent; width: 0; height: 0; }
.tri.up { border-bottom: 9px solid #707070; border-top: 0; margin-top: 3px; }
.tri.down { border-top: 9px solid #707070; border-bottom: 0; }
.tri.left { border-right: 9px solid #707070; border-left: 0; }
.tri.right { border-left: 9px solid #707070; border-right: 0; }

/* sheet tabs */
.tabs { display: flex; align-items: center; height: 39px; flex: none; border-top: 1px solid #d8d8d8; font-size: 17px; padding: 0 23px 0 15px; }
.nav { width: 41px; display: flex; justify-content: center; }
.tablist { display: flex; align-items: center; height: 100%; margin-left: 44px; }
.tablist i { width: 1px; height: 24px; background: #c8c8c8; margin: 0 5px; }
.tab { height: 30px; padding: 0 11px; border-radius: 5px; color: #262626; }
.yellow { background: #ffffcc; color: #000; }
.purple { background: #7030a0; color: #fff; }
.blue { background: #0070c0; color: #fff; }
.active { align-self: flex-start; margin: -1px 1px 0; height: 34px; padding: 0 7px; font-weight: 600; font-size: 16px; background: linear-gradient(#fff 10%, #9cc8ea); border-radius: 0 0 6px 6px; box-shadow: 0 0 0 2px #fff, 0 1px 4px #999; clip-path: inset(0 -5px -5px); }
.active span { display: block; height: 27px; line-height: 26px; border-bottom: 2px solid #0f703b; }
.plus { margin-left: 47px; }
.tabs .dots { margin: 0 18px 0 auto; }
.hbar { display: flex; align-items: center; gap: 6px; width: 204px; height: 22px; border-radius: 8px; background: #f5f5f5; padding: 0 6px; }
.hbar .thumb { flex: 1; height: 11px; }

/* status */
.status { display: flex; align-items: center; height: 28px; flex: none; background: #f4f4f4; border-top: 1px solid #fff; font-size: 13px; padding: 0 11px 0 14px; }
.ready { width: 60px; }
.access { display: flex; align-items: center; gap: 3px; font-weight: 700; margin-left: 20px; }
.access svg { margin-left: 1px; }
.views { display: flex; height: 100%; margin-left: auto; }
.views button { width: 50px; display: flex; align-items: center; justify-content: center; }
.views .on { background: #e0e0e0; }
.zb { margin: 0 5px; }
.zoom { appearance: none; width: 126px; height: 14px; background: linear-gradient(#555, #555) center / 100% 1px no-repeat, linear-gradient(#555, #555) 64px center / 1px 8px no-repeat; }
.zoom::-webkit-slider-thumb { appearance: none; width: 6px; height: 14px; background: #555; }
.pctz { margin-left: 8px; }

/* taskbar */
.taskbar { display: flex; height: 50px; flex: none; background: #d0dfea; color: #111; }
.taskbar button { display: flex; align-items: center; justify-content: center; }
.start { width: 60px; }
.tsearch { display: flex; align-items: center; width: 361px; background: #fff; border: 1px solid #c4c4c4; padding: 0 4px 0 14px; font-size: 18px; }
.tsearch input { flex: 1; margin-left: 15px; }
.tsearch input::placeholder { color: #444; }
.app { width: 62px; }
.run { background: linear-gradient(#0078d7, #0078d7) center bottom / 51px 3px no-repeat; }
.multi { background: linear-gradient(90deg, #0078d7 42px, #5fa8e6 42px) center bottom / 51px 3px no-repeat; }
.upw span { width: 26px; height: 26px; border-radius: 50%; background: #14a800; color: #fff; font: 700 14px/23px Inter, sans-serif; }
.tray { display: flex; align-items: center; margin-left: auto; border-right: 1px solid #9fb2c0; margin-right: 4px; gap: 8px; padding-right: 22px; }
.wicon { position: relative; margin-right: 1px; padding-top: 6px; }
.wicon b { position: absolute; right: 0; top: -5px; width: 15px; height: 15px; border-radius: 50%; background: #c42b1c; color: #fff; font: 11px/15px "Open Sans", sans-serif; text-align: center; }
.temp { font-size: 18px; }
.t1 { margin: 0 7px 0 18px; }
.clock { font-size: 14px; line-height: 23px; text-align: center; margin-left: 6px; }
.t2 { margin: 0 18px 0 14px; }
.copilot { position: relative; }
.copilot b { position: absolute; right: 1px; bottom: -6px; background: #ffc60a; border-radius: 2px; font: 700 9px/10px "Open Sans", sans-serif; padding: 0 1px; }
```
FILE: grid.js
```js
// Column widths, from the row-number gutter to column Y.
const widths = [34, 14, 222, 127].concat(Array(12).fill(120), Array(10).fill(72));
const letters = 'ABCDEFGHIJKLMNOPQRSTUVWXY'.split('');
const defaultHeight = 22;
const heights = { 2: 28, 3: 23, 4: 23, 5: 23, 6: 23, 8: 23, 10: 23, 16: 23, 30: 23, 32: 23, 33: 23, 42: 23, 43: 23 };

// Each value may carry style names after a bar: "text|b it".
const d = n => Array(n).fill('-');
const rows = {
  2: { B: 'IRR Hurdle Waterfall|b h1' },
  4: { B: 'IRR Hurdles|b', D: 'Hurdle|b', E: 'LP|b', F: 'GP|b', H: 'Contributions|b' },
  5: { B: 'Tier 1', D: '7.0%|blue in', E: '100%|blue in', F: '0.0%', H: 'LP|b', I: 'GP|b' },
  6: { B: 'Tier 2', D: '15.0%|blue in', E: '75%|blue in', F: '25.0%', H: '95.0%|blue in', I: '5.0%' },
  7: { B: 'Tier 3', D: '20.0%|blue in', E: '70%|blue in', F: '30.0%' },
  8: { B: 'Thereafter', E: '50%|blue in', F: '50.0%' },
  10: { D: 'Total|b ctr', years: true },
  11: { B: 'Contributions|ind', D: '(430,555)', run: ['(430,555)', ...d(10)] },
  12: { B: 'Available Distributions (before Asset mgmt. fee)|ind', D: '4,884,091', run: ['', ...Array(9).fill('285,000'), '2,319,091'] },
  13: { B: 'Asset Management Fee|ind it', D: '-', run: ['', ...d(10)] },
  14: { B: 'Available Distributions|ind', D: '4,884,091', run: ['', ...Array(9).fill('285,000'), '2,319,091'] },
  15: { B: 'Total Cash Flows|b', D: '4,453,536', run: ['(430,555)', ...Array(9).fill('285,000'), '2,319,091'], style: 'b' },
  17: { B: 'Tier 1 Distributions|b' },
  18: { B: 'Limited Partner|b it' },
  19: { B: 'Beginning Balance', run: ['', '(409,027)', '(152,659)', ...d(8)] },
  20: { B: 'Add: Contributions', C: '95.0%|navy', D: '(409,027)', run: ['(409,027)', ...d(10)] },
  21: { B: 'Preferred Return Due', C: '7.0%|navy', D: '(39,318)', run: ['-', '(28,632)', '(10,686)', ...d(8)] },
  22: { B: 'Tier 1 Distributions', C: '100.0%|navy', D: '448,345', run: ['-', '285,000', '163,345', ...d(8)] },
  24: { B: 'Ending Balance', D: '-', run: ['(409,027)', '(152,659)', ...d(9)] },
  26: { B: 'Check|it', C: '7.0%|it pos', D: '39,318', run: ['(409,027)', '285,000', '163,345', ...d(8)], style: 'it' },
  28: { B: 'General Partner|b it' },
  29: { B: 'Contributions', C: '5.0%|navy', D: '(21,528)', run: ['(21,528)', ...d(10)] },
  30: { B: 'Tier 1 Distributions', C: '0.0%|navy', D: '-', run: d(11) },
  32: { B: 'Cash Flows for Catch-up', D: '4,435,746', run: ['0', '-', '121,655', ...Array(7).fill('285,000'), '2,319,091'], style: 'it' },
  34: { B: 'GP Catch-up|b' },
  35: { B: 'General Partner|b it' },
  36: { B: 'Beginning Balance', run: ['', '(21,528)', '(23,250)', ...d(8)] },
  37: { B: 'Add: Contributions', C: '5%|navy', D: '(21,528)|flag', run: ['(21,528)', ...d(10)] },
  38: { B: 'Preferred Return Due', C: '8%|navy', D: '(3,582)', run: ['-', '(1,722)', '(1,860)', ...d(8)] },
  39: { B: 'Tier 1 Distributions', D: '-', run: d(11) },
  40: { B: 'Catch-up', C: '100%|navy', D: '25,110', run: ['0', '-', '25,110', ...d(8)] },
  42: { B: 'Ending Balance', D: '-', run: ['(21,528)', '(23,250)', ...d(9)] },
  44: { B: 'Check|it', C: '8.0%|it pos', D: '3,582', run: ['(21,528)', '-', '25,110', ...d(8)] }
};

// Fills and borders: [columns, first row, last row, style name].
const areas = [
  ['BO', 2, 2, 'banner'], ['BO', 2, 2, 'ud'],
  ['BF', 4, 4, 'lt'], ['BF', 4, 4, 'u2'], ['BB', 5, 8, 'l2'], ['FF', 5, 8, 'r2'], ['BF', 8, 8, 'u2'],
  ['HI', 3, 3, 'u2'], ['HI', 4, 4, 'lt'], ['HI', 4, 5, 'u1'], ['HI', 6, 6, 'u2'], ['HH', 4, 6, 'l2'], ['II', 4, 6, 'r2'], ['HH', 5, 6, 'r1'],
  ['KL', 3, 3, 'u2'],
  ['BO', 10, 10, 'u2'], ['BO', 12, 12, 'dot'], ['BO', 14, 14, 'u1'], ['BO', 15, 15, 'dk'],
  ['CD', 11, 15, 'r1'], ['BO', 16, 16, 'u2'], ['BO', 17, 17, 'md'], ['CD', 18, 30, 'r1'],
  ['BO', 23, 24, 'u1'], ['BO', 24, 24, 'lt'], ['BO', 30, 30, 'u2'], ['BB', 17, 30, 'l2'], ['OO', 17, 30, 'r2'],
  ['BO', 31, 31, 'u1'], ['BO', 32, 32, 'ud'], ['BB', 32, 32, 'l2'], ['OO', 32, 32, 'r2'], ['CD', 32, 32, 'r1'],
  ['BO', 33, 33, 'u2'], ['BO', 34, 34, 'md'], ['BB', 34, 46, 'l2'], ['OO', 34, 46, 'r2'], ['CD', 35, 46, 'r1'],
  ['BO', 41, 41, 'u1'], ['BO', 42, 42, 'lt'], ['BO', 42, 42, 'ud']
];

const grid = document.getElementById('grid');
grid.querySelector('colgroup').innerHTML = widths.map(w => `<col style="width:${w}px">`).join('');
grid.querySelector('thead').innerHTML = '<tr><th class="corner"></th>' + letters.map(l => `<th>${l}</th>`).join('') + '</tr>';

let html = '';
for (let r = 1; r <= 46; r++) {
  const row = rows[r] || {};
  html += `<tr style="height:${heights[r] || defaultHeight}px"><th>${r}</th>`;
  for (let c = 0; c < letters.length; c++) {
    const col = letters[c];
    if (col === 'K' && (r === 4 || r === 5)) {
      html += r === 4
        ? '<td colspan="2" class="txt ctr lt l2 r2"><b>GP Catch-up Rate</b> (enter 0% if</td>'
        : '<td colspan="2" class="ctr blue in l2 r2 u2">8.00%</td>';
      c++;
      continue;
    }
    let raw = row[col] || '';
    if (!raw && c >= 4 && c <= 14) {
      if (row.years) raw = `Year ${c - 4}|b`;
      else if (row.run) raw = row.run[c - 4] + '|' + (row.style || '');
    }
    const [text, style = ''] = raw.split('|');
    const cls = style.split(' ').filter(Boolean);
    if (col === 'B') cls.push('txt');
    if (col === 'D' && r > 10) cls.push('b');
    if (c >= 3 && (text === '-' || /^[\d,]+$/.test(text))) cls.push('pos');
    for (const [span, from, to, name] of areas) {
      if (r >= from && r <= to && col >= span[0] && col <= span[1]) cls.push(name);
    }
    html += `<td class="${cls.join(' ')}">${text}</td>`;
  }
  html += '</tr>';
}
grid.querySelector('tbody').innerHTML = html;
```
